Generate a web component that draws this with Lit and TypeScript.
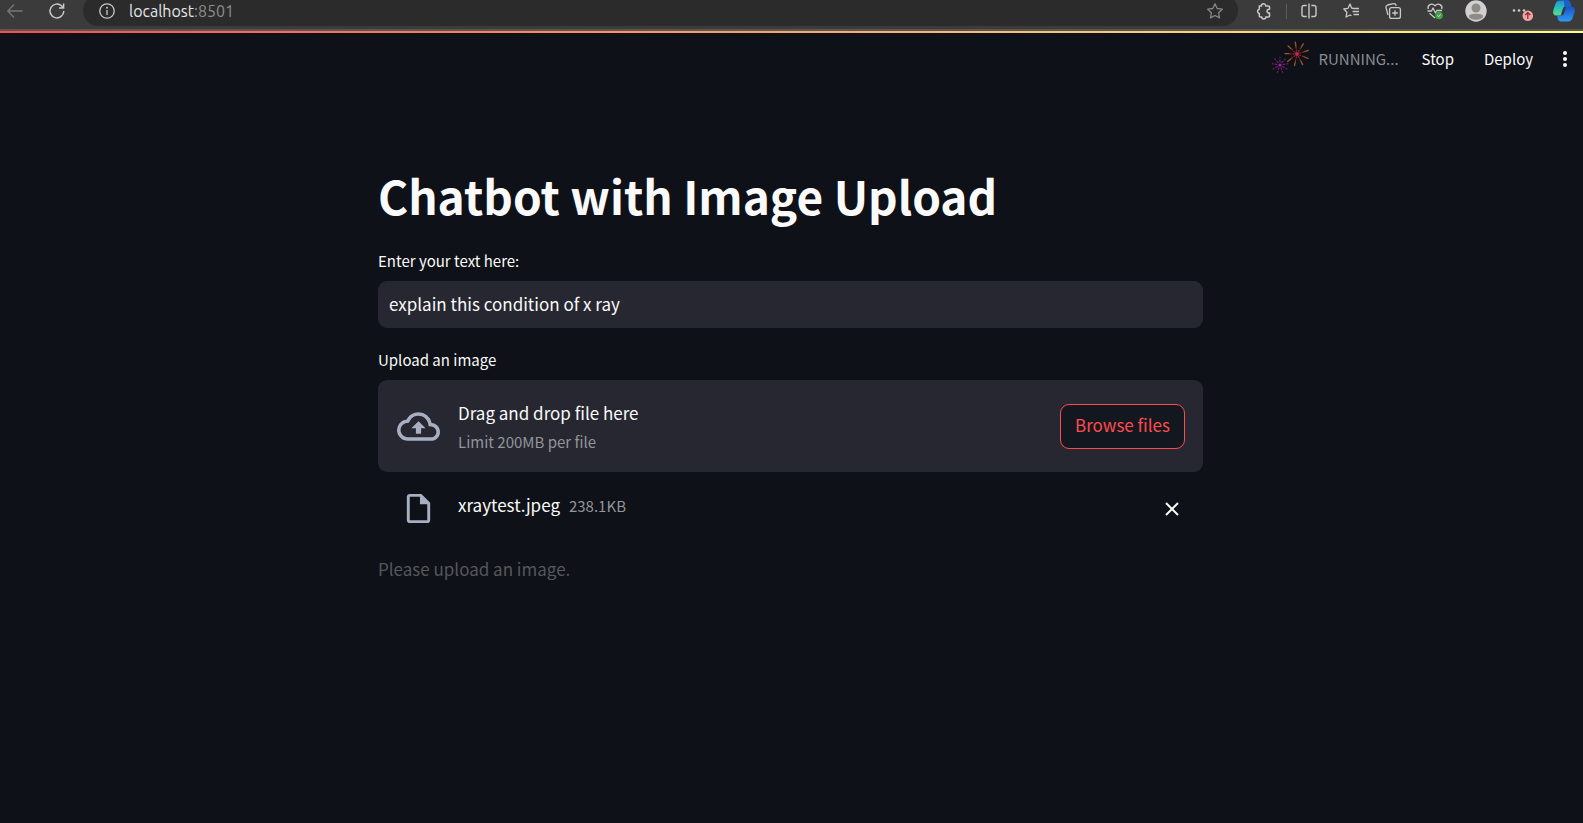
import { LitElement, html, css, svg } from "lit";
import { customElement, property, state } from "lit/decorators.js";

const rays = (cx: number, cy: number, inner: number, outer: number, count: number, turn: number) =>
  Array.from({ length: count }, (_, i) => {
    const a = ((i * 360) / count + turn) * (Math.PI / 180);
    return svg`<line x1=${cx + Math.cos(a) * inner} y1=${cy + Math.sin(a) * inner}
      x2=${cx + Math.cos(a) * outer} y2=${cy + Math.sin(a) * outer} />`;
  });

@customElement("browser-bar")
export class BrowserBar extends LitElement {
  @property() host = "";
  @property() port = "";

  static styles = css`
    :host {
      display: block;
      overflow: hidden;
      background: #3b3b3b;
      border-bottom: 2px solid #565656;
      font-family: Ubuntu, "Noto Sans", sans-serif;
    }
    .bar {
      display: flex;
      align-items: center;
      height: 29px;
      padding: 0 8px 0 6px;
    }
    button {
      display: flex;
      flex: none;
      align-items: center;
      justify-content: center;
      width: 18px;
      height: 22px;
      padding: 0;
      border: 0;
      background: none;
      color: #c9c9c9;
      margin-bottom: 7px;
    }
    .back { color: #777; }
    .nav { display: flex; gap: 24px; }
    .address {
      display: flex;
      flex: 1;
      align-items: center;
      height: 31px;
      margin: 0 17px 8px 17px;
      padding: 0 14px 0 15px;
      border-radius: 16px;
      background: #2b2b2b;
    }
    .address button { margin: 0; }
    .url {
      flex: 1;
      margin-left: 13px;
      font-size: 16px;
      line-height: 22px;
      color: #e6e6e6;
    }
    .port { color: #8e8e8e; }
    .address .star { color: #858585; }
    .tools { display: flex; align-items: center; gap: 24px; }
    .split { display: flex; align-items: center; gap: 13px; }
    .rule { width: 1px; height: 15px; margin-bottom: 7px; background: #5c5c5c; }
    .tail { display: flex; align-items: center; gap: 22px; margin-left: 21px; }
    .tail button { width: 22px; }
    svg { display: block; flex: none; overflow: visible; }
  `;

  render() {
    return html`
      <div class="bar">
        <div class="nav">
          <button class="back" aria-label="Back">
            <svg width="16" height="16" viewBox="0 0 16 16" fill="none" stroke="currentColor" stroke-width="1.3">
              <path d="M15.5 8H1M7 1.5.8 8 7 14.5" />
            </svg>
          </button>
          <button aria-label="Refresh">
            <svg width="16" height="16" viewBox="0 0 16 16" fill="none" stroke="currentColor" stroke-width="1.5">
              <path d="M14.8 8A6.9 6.9 0 1 1 12.7 3L14.6 5M14.6.5V5H10" />
            </svg>
          </button>
        </div>
        <div class="address">
          <button aria-label="Site information">
            <svg width="16" height="16" viewBox="0 0 16 16" fill="none" stroke="currentColor" stroke-width="1.3">
              <circle cx="8" cy="8" r="7.2" /><path d="M8 7v5" /><circle cx="8" cy="4.7" r=".4" />
            </svg>
          </button>
          <div class="url">${this.host}<span class="port">:${this.port}</span></div>
          <button class="star" aria-label="Favorite">
            <svg width="16" height="16" viewBox="0 0 16 16" fill="none" stroke="currentColor" stroke-width="1.3" stroke-linejoin="round">
              <path d="m8 .8 2.2 4.7 5.1.7-3.7 3.6.9 5.1L8 12.5l-4.5 2.4.9-5.1L.7 6.2l5.1-.7z" />
            </svg>
          </button>
        </div>
        <div class="tools">
          <div class="split">
            <button aria-label="Extensions">
              <svg width="16" height="16" viewBox="0 0 16 16" fill="none" stroke="currentColor" stroke-width="1.5" stroke-linejoin="round">
                <path d="M3.300 3h2.200a2.100 2.100 0 0 1 4.200-.4l.1.4h2.700a1 1 0 0 1 1 1v2.300a1.900 1.900 0 1 0 0 3.600V13a1 1 0 0 1-1 1H9.800a2 2 0 0 1-4 0H4.300a1 1 0 0 1-1-1v-2.500a2.200 2.200 0 0 1 0-4.300z" />
              </svg>
            </button>
            <span class="rule"></span>
            <button aria-label="Split screen">
              <svg width="16" height="16" viewBox="0 0 16 16" fill="none" stroke="currentColor" stroke-width="1.4">
                <path d="M5.700 2.500H3A2 2 0 0 0 1 4.500v7a2 2 0 0 0 2 2h2.700M10.300 2.500H13a2 2 0 0 1 2 2v7a2 2 0 0 1-2 2h-2.700M8 .5v15" />
              </svg>
            </button>
          </div>
          <button aria-label="Favorites list">
            <svg width="16" height="16" viewBox="0 0 16 16" fill="none" stroke="currentColor" stroke-width="1.3" stroke-linejoin="round">
              <path d="M10.500 5.500 8.600 5 7 1 5 5.300.8 6l3.100 3.200-.8 4.800L7 12l1.500.8M10.500 5.500H16M9.500 8.500H16M10.500 11.500H16" />
            </svg>
          </button>
          <button aria-label="Collections">
            <svg width="16" height="16" viewBox="0 0 16 16" fill="none" stroke="currentColor" stroke-width="1.3">
              <rect x="4.600" y="4.600" width="10.800" height="10.800" rx="2" />
              <path d="M10 7.200v5.600M7.200 10h5.600M3 12 1 4.500A2.200 2.200 0 0 1 2.500 2L8.500.7a2 2 0 0 1 2.500 1.500l.2.8" />
            </svg>
          </button>
          <button aria-label="Browser essentials">
            <svg width="17" height="16" viewBox="0 0 17 16" fill="none" stroke="currentColor" stroke-width="1.3" stroke-linejoin="round">
              <path d="M1.300 6C0 2.200 4.800-.7 8 2.800 11.200-.7 16 2.200 14.700 6M.5 8h4l1.500-3 2.500 5 1.300-2.500H15M2.500 10.200 8 15" />
              <circle cx="12" cy="12.5" r="3.8" fill="#3da447" stroke="none" /><path stroke="#d8f0d8" stroke-width="1" d="m10.400 12.500 1.200 1.200 2.200-2.300" />
            </svg>
          </button>
        </div>
        <div class="tail">
          <button aria-label="Profile">
            <svg width="22" height="22" viewBox="0 0 22 22">
              <circle cx="11" cy="11" r="10.7" fill="#d2d0ce" /><circle cx="11" cy="8" r="4.5" fill="#8d8a87" />
              <path d="M4 16c0-3 14-3 14 0 0 5-14 5-14 0z" fill="#8d8a87" />
            </svg>
          </button>
          <button aria-label="Settings and more">
            <svg width="22" height="22" viewBox="0 0 22 22">
              <g fill="#c9c9c9"><circle cx="5" cy="10.5" r="1.3" /><circle cx="10" cy="10.5" r="1.3" /><circle cx="15" cy="10.5" r="1.3" /></g>
              <circle cx="18.8" cy="15.8" r="5.3" fill="#f2a3a0" />
              <path d="M18.800 19v-6M16.300 15l2.500-2.500 2.500 2.500" fill="none" stroke="#7c2f2f" stroke-width="1.2" />
            </svg>
          </button>
          <button aria-label="Copilot">
            <svg width="22" height="22" viewBox="0 0 22 22">
              <defs>
                <linearGradient id="cool" x1="0" y1="0" x2="0" y2="1"><stop offset="0" stop-color="#1d8fe0" /><stop offset=".5" stop-color="#29c3b5" /><stop offset="1" stop-color="#5fd98a" /></linearGradient>
                <linearGradient id="deep" x1="0" y1="0" x2="0" y2="1"><stop offset="0" stop-color="#1b50c4" /><stop offset="1" stop-color="#2f9bf2" /></linearGradient>
              </defs>
              <path d="M7 .5h7.500c2 0 2.500 1.500 3 3.500l.8 2.500h-4c-2 0-2.800 1.300-3.300 3.200L9 15.500H3.500C.5 15.500-.5 13 .4 10L2.600 3.500C3.300 1.500 4.800.5 7 .5z" fill="url(#cool)" />
              <path d="M11 .5h3.500c2 0 2.500 1.500 3 3.500l.8 2.500h-4c-1.500 0-2.300.7-2.800 2z" fill="#1a5ed0" />
              <path d="M15 21.500H8c-2 0-2.800-1.300-3.300-3.300L4 15.500h3.700c2 0 3-1.200 3.500-3l1.700-6h5.300c3.300 0 4.300 2.500 3.400 5.500l-2.200 6.500c-.7 2-2.200 3-4.400 3z" fill="url(#deep)" />
              <path d="m12.900 6.500-1.900 6.700c-.5 1.500-1.500 2.300-3.300 2.300l2-6.500c.6-1.700 1.500-2.500 3.200-2.500z" fill="#333b4a" />
            </svg>
          </button>
        </div>
      </div>
    `;
  }
}

@customElement("status-header")
export class StatusHeader extends LitElement {
  static styles = css`
    :host { display: block; }
    .line { height: 2px; background: linear-gradient(90deg, #ff4b4b, #fffd80); }
    header {
      display: flex;
      align-items: center;
      justify-content: flex-end;
      height: 51px;
      padding-right: 9px;
      font-size: 15px;
      line-height: 24px;
    }
    .status { display: flex; align-items: center; gap: 8px; color: #8a8c91; }
    .fire { margin-bottom: 4px; }
    button {
      padding: 0;
      border: 0;
      background: none;
      color: inherit;
      font: inherit;
    }
    .stop { margin-left: 23px; }
    .deploy { margin-left: 30px; }
    .menu { display: flex; justify-content: center; width: 18px; margin-left: 23px; }
    svg { display: block; }
  `;

  render() {
    return html`
      <div class="line"></div>
      <header>
        <div class="status" role="status">
          <svg class="fire" width="38" height="34" viewBox="0 0 38 34" fill="none" stroke-linecap="round">
            <g stroke="#a0561f" stroke-width="1.3">${rays(25, 14, 8, 12, 9, 22)}</g>
            <g stroke="#8f2a2c" stroke-width="1.2" stroke-dasharray="1 2">${rays(25, 14, 3, 7, 9, 22)}</g>
            <circle cx="25" cy="14" r="2" fill="#d8203f" />
            <g stroke="#6d1f72" stroke-width="1.2" stroke-dasharray="2 2">${rays(8, 25, 3, 8, 9, 30)}</g>
            <circle cx="8" cy="25" r="1.6" fill="#a0249c" />
          </svg>
          <span>RUNNING...</span>
        </div>
        <button class="stop">Stop</button>
        <button class="deploy">Deploy</button>
        <button class="menu" aria-label="Main menu">
          <svg width="6" height="18" viewBox="0 0 6 18" fill="#fafafa">
            <circle cx="3" cy="3" r="2" /><circle cx="3" cy="9" r="2" /><circle cx="3" cy="15" r="2" />
          </svg>
        </button>
      </header>
    `;
  }
}

@customElement("file-uploader")
export class FileUploader extends LitElement {
  @property({ attribute: false }) file = { name: "", size: "" };

  static styles = css`
    :host { display: block; }
    .label { font-size: 15px; line-height: 24px; margin-bottom: 8px; }
    .drop {
      display: flex;
      align-items: center;
      padding: 16px 18px;
      border-radius: 9px;
      background: #262730;
    }
    .lead { display: flex; flex: none; justify-content: center; width: 44px; margin-right: 18px; }
    .hint { flex: 1; padding-top: 2px; }
    .hint > div { line-height: 30px; }
    .hint .limit { line-height: 28px; }
    .limit, .size { font-size: 15px; color: #94959a; }
    button { font: inherit; padding: 0; }
    .browse {
      height: 45px;
      padding: 0 14px 2px;
      border: 1px solid #ff4b4b;
      border-radius: 9px;
      background: #131720;
      color: #ff4b4b;
    }
    .file { display: flex; align-items: center; padding: 18px 18px 0; }
    .name { margin-right: 9px; }
    .entry { flex: 1; line-height: 30px; margin-bottom: 6px; }
    .remove {
      display: flex;
      align-items: center;
      justify-content: center;
      width: 26px;
      height: 36px;
      border: 0;
      background: none;
      color: #fafafa;
    }
    svg { display: block; }
  `;

  render() {
    return html`
      <div class="label" id="label">Upload an image</div>
      <section class="drop" aria-labelledby="label">
        <span class="lead">
          <svg width="43" height="43" viewBox="0 0 24 24" fill="#a9afc3">
            <path d="M19.350 10.040A7.490 7.490 0 0 0 12 4C9.110 4 6.600 5.640 5.350 8.040A5.994 5.994 0 0 0 0 14c0 3.310 2.690 6 6 6h13c2.760 0 5-2.240 5-5 0-2.640-2.050-4.780-4.650-4.960zM19 18H6c-2.210 0-4-1.790-4-4 0-2.050 1.530-3.760 3.560-3.970l1.070-.11.5-.95A5.469 5.469 0 0 1 12 6c2.620 0 4.880 1.860 5.390 4.430l.3 1.500 1.530.11A2.980 2.980 0 0 1 22 15c0 1.650-1.350 3-3 3zM8 13h2.550v3h2.900v-3H16l-4-4z" />
          </svg>
        </span>
        <div class="hint">
          <div>Drag and drop file here</div>
          <div class="limit">Limit 200MB per file</div>
        </div>
        <button class="browse">Browse files</button>
      </section>
      <div class="file">
        <span class="lead">
          <svg width="35" height="35" viewBox="0 0 24 24" fill="#a9afc3">
            <path d="M14 2H6c-1.100 0-2 .9-2 2v16c0 1.100.9 2 2 2h12c1.100 0 2-.9 2-2V8l-6-6zM6 20V4h7v5h5v11H6z" />
          </svg>
        </span>
        <div class="entry"><span class="name">${this.file.name}</span><span class="size">${this.file.size}</span></div>
        <button class="remove" aria-label="Remove file">
          <svg width="14" height="14" viewBox="0 0 14 14" fill="none" stroke="currentColor" stroke-width="2">
            <path d="m1 1 12 12M13 1 1 13" />
          </svg>
        </button>
      </div>
    `;
  }
}

@customElement("app-root")
export class AppRoot extends LitElement {
  @state() private question = "explain this condition of x ray";

  static styles = css`
    :host {
      display: block;
      min-height: 100vh;
      background: #0e1117;
      color: #fafafa;
      font-family: "Source Sans Pro", "Noto Sans CJK SC", sans-serif;
      font-size: 17px;
      line-height: 28px;
    }
    main {
      box-sizing: border-box;
      max-width: 859px;
      margin: 0 auto;
      padding: 81px 18px 48px 16px;
    }
    h1 {
      margin: 0;
      font-size: 46px;
      font-weight: 700;
      line-height: 60px;
    }
    label {
      display: block;
      margin: 24px 0 8px;
      font-size: 15px;
      line-height: 24px;
    }
    input {
      display: block;
      box-sizing: border-box;
      width: 100%;
      height: 47px;
      padding: 0 10px 2px;
      border: 1px solid #262730;
      border-radius: 9px;
      outline: 0;
      background: #262730;
      color: inherit;
      font: inherit;
    }
    file-uploader { margin-top: 20px; }
    .stale { margin: 28px 0 0; color: #55575c; }
  `;

  render() {
    return html`
      <browser-bar host="localhost" port="8501"></browser-bar>
      <status-header></status-header>
      <main>
        <h1>Chatbot with Image Upload</h1>
        <label for="question">Enter your text here:</label>
        <input
          id="question"
          type="text"
          .value=${this.question}
          @input=${(e: Event) => (this.question = (e.target as HTMLInputElement).value)}
        />
        <file-uploader .file=${{ name: "xraytest.jpeg", size: "238.1KB" }}></file-uploader>
        <p class="stale">Please upload an image.</p>
      </main>
    `;
  }
}
